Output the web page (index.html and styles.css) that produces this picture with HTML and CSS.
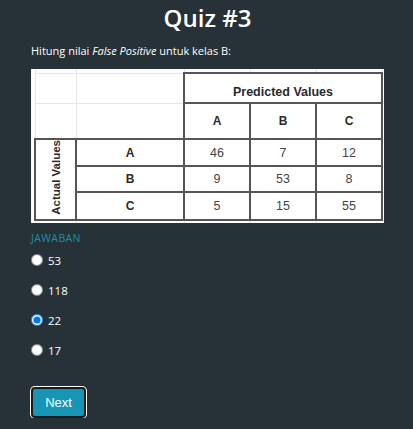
FILE: index.html
```html
<!DOCTYPE html>
<html lang="id">
<head>
<meta charset="utf-8">
<title>Quiz #3</title>
<link rel="stylesheet" href="styles.css">
</head>
<body>
<main class="quiz">
  <h1 class="title">Quiz #3</h1>
  <p class="question">Hitung nilai <em>False Positive</em> untuk kelas B:</p>
  <div class="sheet">
    <table class="matrix">
      <colgroup>
        <col class="c-av"><col class="c-lab"><col class="c-num"><col class="c-num"><col class="c-num"><col class="c-rest">
      </colgroup>
      <tr class="strip-top"><td></td><td></td><td></td><td></td><td></td><td></td></tr>
      <tr class="r-h1"><td></td><td></td><td class="dk pv" colspan="3">Predicted Values</td><td></td></tr>
      <tr class="r-h2"><td></td><td></td><td class="dk hd">A</td><td class="dk hd">B</td><td class="dk hd">C</td><td></td></tr>
      <tr class="r-a"><td class="dk av" rowspan="3"><span>Actual Values</span></td><td class="dk hd">A</td><td class="dk num">46</td><td class="dk num">7</td><td class="dk num">12</td><td></td></tr>
      <tr class="r-b"><td class="dk hd">B</td><td class="dk num">9</td><td class="dk num">53</td><td class="dk num">8</td><td></td></tr>
      <tr class="r-c"><td class="dk hd">C</td><td class="dk num">5</td><td class="dk num">15</td><td class="dk num">55</td><td></td></tr>
      <tr class="strip-bot"><td></td><td></td><td></td><td></td><td></td><td></td></tr>
    </table>
  </div>
  <div class="answers">
    <div class="answers-label">JAWABAN</div>
    <label class="option"><input type="radio" name="ans" value="53"><span>53</span></label>
    <label class="option"><input type="radio" name="ans" value="118"><span>118</span></label>
    <label class="option"><input type="radio" name="ans" value="22" checked><span>22</span></label>
    <label class="option"><input type="radio" name="ans" value="17"><span>17</span></label>
  </div>
  <button class="next" type="button">Next</button>
</main>
</body>
</html>
```
FILE: styles.css
```css
html, body {
  margin: 0;
  padding: 0;
  background: #263238;
}
body {
  font-family: "Open Sans", "Noto Sans", sans-serif;
  color: #fff;
}
.quiz {
  padding: 2px 29px 0 31px;
  display: flex;
  flex-direction: column;
  align-items: flex-start;
}
.title {
  align-self: stretch;
  text-align: center;
  font-size: 24px;
  line-height: 32px;
  font-weight: 600;
  margin: 0;
}
.question {
  margin: 8px 0 0;
  font-size: 11px;
  line-height: 18px;
}
.question em {
  font-style: italic;
}
.sheet {
  margin-top: 9px;
  width: 353px;
  height: 154px;
  overflow: hidden;
  background: #fff;
  padding-left: 3px;
  box-sizing: border-box;
}
.matrix {
  border-collapse: collapse;
  table-layout: fixed;
  width: 367px;
  font-family: "Liberation Sans", Arial, sans-serif;
  color: #2a2a2a;
}
.c-av { width: 41px; }
.c-lab { width: 108px; }
.c-num { width: 66px; }
.c-rest { width: 20px; }
.matrix td {
  border: 1px solid #e4e4e4;
  padding: 0;
  text-align: center;
  vertical-align: middle;
}
.strip-top td { border-top: 0; height: 3px; }
.r-h1 td { height: 25px; }
.r-h2 td { height: 34px; }
.r-a td { height: 25px; }
.r-b td { height: 24px; }
.r-c td { height: 26px; }
.strip-bot td { height: 10px; border-bottom: 0; }
.matrix td.dk {
  border: 2px solid #555;
}
.pv {
  font-weight: bold;
  font-size: 12.5px;
  padding-top: 8px !important;
}
.r-h1 td.pv { height: 20px; }
.hd {
  font-weight: bold;
  font-size: 12px;
}
.num {
  font-size: 12.5px;
  color: #444;
}
.av span {
  display: inline-block;
  writing-mode: vertical-rl;
  transform: rotate(180deg);
  font-weight: bold;
  font-size: 11.5px;
}
.answers {
  margin-top: 8px;
  display: flex;
  flex-direction: column;
}
.answers-label {
  font-size: 10.5px;
  line-height: 14px;
  letter-spacing: 0.4px;
  color: #1e8fa8;
}
.option {
  height: 30px;
  display: flex;
  align-items: center;
  gap: 5px;
  font-size: 11.5px;
}
.option input {
  margin: 0;
  width: 12px;
  height: 12px;
}
.next {
  margin-top: 22px;
  background: #1795b4;
  color: #fff;
  font-family: "Liberation Sans", Arial, sans-serif;
  font-size: 13px;
  border: 2px solid #161c20;
  border-radius: 4px;
  box-shadow: 0 0 0 1px #fff;
  width: 55px;
  height: 31px;
  padding: 0;
  margin-left: 0;
}
```
